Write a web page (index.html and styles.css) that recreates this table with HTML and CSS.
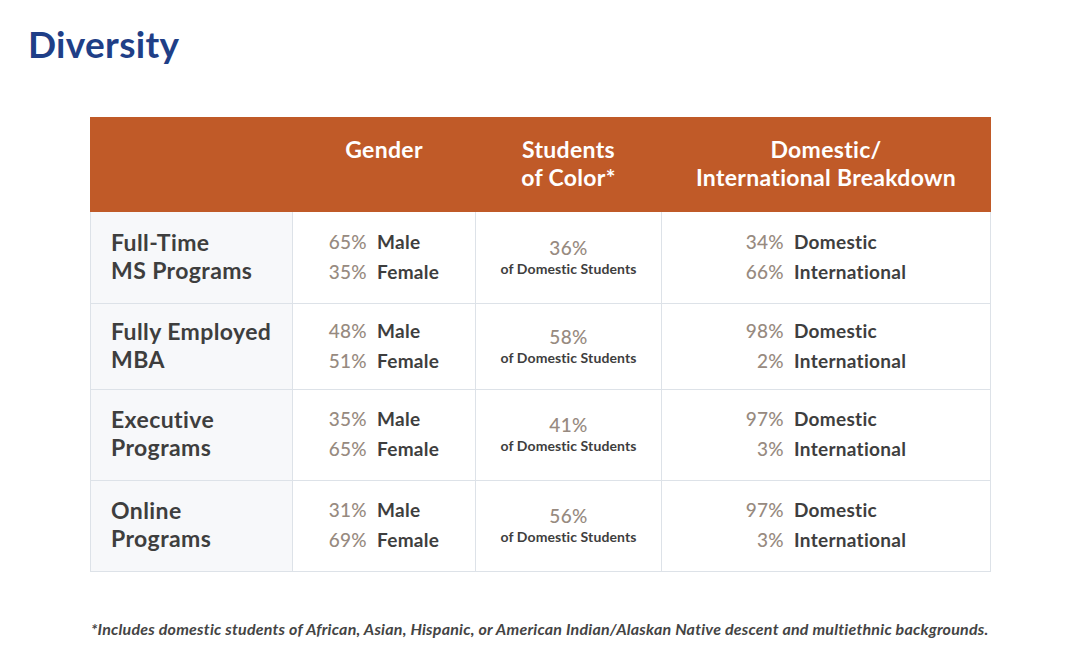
FILE: index.html
```html
<!DOCTYPE html>
<html>
<head>
<meta charset="utf-8">
<link rel="stylesheet" href="styles.css">
</head>
<body>
<h1 class="title">Diversity</h1>
<table class="stats">
  <thead>
    <tr>
      <th class="blank"></th>
      <th>Gender</th>
      <th>Students<br>of Color*</th>
      <th>Domestic/<br>International Breakdown</th>
    </tr>
  </thead>
  <tbody>
    <tr class="r1">
      <td class="label"><div class="lbl">Full-Time<br>MS Programs</div></td>
      <td><div class="pairs"><span class="pct">65%</span><span class="txt">Male</span><span class="pct">35%</span><span class="txt">Female</span></div></td>
      <td class="color"><div class="pct big">36%</div><div class="sub">of Domestic Students</div></td>
      <td><div class="pairs"><span class="pct">34%</span><span class="txt">Domestic</span><span class="pct">66%</span><span class="txt">International</span></div></td>
    </tr>
    <tr class="r2">
      <td class="label"><div class="lbl">Fully Employed<br>MBA</div></td>
      <td><div class="pairs"><span class="pct">48%</span><span class="txt">Male</span><span class="pct">51%</span><span class="txt">Female</span></div></td>
      <td class="color"><div class="pct big">58%</div><div class="sub">of Domestic Students</div></td>
      <td><div class="pairs"><span class="pct">98%</span><span class="txt">Domestic</span><span class="pct">2%</span><span class="txt">International</span></div></td>
    </tr>
    <tr class="r3">
      <td class="label"><div class="lbl">Executive<br>Programs</div></td>
      <td><div class="pairs"><span class="pct">35%</span><span class="txt">Male</span><span class="pct">65%</span><span class="txt">Female</span></div></td>
      <td class="color"><div class="pct big">41%</div><div class="sub">of Domestic Students</div></td>
      <td><div class="pairs"><span class="pct">97%</span><span class="txt">Domestic</span><span class="pct">3%</span><span class="txt">International</span></div></td>
    </tr>
    <tr class="r4">
      <td class="label"><div class="lbl">Online<br>Programs</div></td>
      <td><div class="pairs"><span class="pct">31%</span><span class="txt">Male</span><span class="pct">69%</span><span class="txt">Female</span></div></td>
      <td class="color"><div class="pct big">56%</div><div class="sub">of Domestic Students</div></td>
      <td><div class="pairs"><span class="pct">97%</span><span class="txt">Domestic</span><span class="pct">3%</span><span class="txt">International</span></div></td>
    </tr>
  </tbody>
</table>
<p class="note">*Includes domestic students of African, Asian, Hispanic, or American Indian/Alaskan Native descent and multiethnic backgrounds.</p>
</body>
</html>
```
FILE: styles.css
```css
html, body {
  margin: 0;
  padding: 0;
  background: #ffffff;
  font-family: Lato, "Open Sans", "Liberation Sans", sans-serif;
  color: #3e3e3e;
}
.title {
  margin: 0;
  padding: 21px 0 0 28px;
  font-size: 37px;
  line-height: 46px;
  font-weight: 700;
  color: #1f3f87;
  letter-spacing: 0.3px;
}
.stats {
  margin: 50px 0 0 90px;
  width: 900px;
  border-collapse: collapse;
  table-layout: fixed;
}
.stats th {
  background: #c05a28;
  color: #ffffff;
  font-size: 23px;
  font-weight: 700;
  line-height: 28px;
  height: 94px;
  padding: 17px 0 0 0;
  text-align: center;
  vertical-align: top;
  border: 1px solid #c05a28;
  box-sizing: border-box;
  letter-spacing: 0.3px;
}
.stats th:nth-child(1) { width: 202px; }
.stats th:nth-child(2) { width: 183px; }
.stats th:nth-child(3) { width: 186px; }
.stats th:nth-child(4) { width: 329px; }
.stats td {
  border: 1px solid #dde2e8;
  padding: 0;
  text-align: center;
  vertical-align: middle;
}
.r1 td { height: 91px; }
.r2 td { height: 85px; }
.r3 td { height: 90px; }
.r4 td { height: 90px; }
.stats td.label {
  background: #f7f8fa;
  text-align: left;
  padding-left: 20px;
  font-size: 23px;
  line-height: 28px;
  font-weight: 700;
  color: #3e3e3e;
  letter-spacing: 0.4px;
}
.lbl {
  margin-bottom: 4px;
}
.pairs {
  display: inline-grid;
  grid-template-columns: auto auto;
  column-gap: 10px;
  row-gap: 0;
  font-size: 19px;
  line-height: 30px;
  text-align: left;
  letter-spacing: 0.3px;
  margin-bottom: 2px;
}
.pairs .pct {
  text-align: right;
}
.pct {
  color: #978a80;
  font-weight: 500;
}
.txt {
  color: #3e3e3e;
  font-weight: 700;
}
.color .big {
  font-size: 19px;
  line-height: 22px;
  letter-spacing: 0.3px;
}
.color .sub {
  font-size: 14px;
  line-height: 20px;
  font-weight: 700;
  color: #3e3e3e;
  letter-spacing: 0.1px;
}
.note {
  margin: 47px 0 0 91px;
  font-size: 16px;
  line-height: 20px;
  font-style: italic;
  font-weight: 700;
  color: #444444;
  letter-spacing: 0.22px;
}
```
